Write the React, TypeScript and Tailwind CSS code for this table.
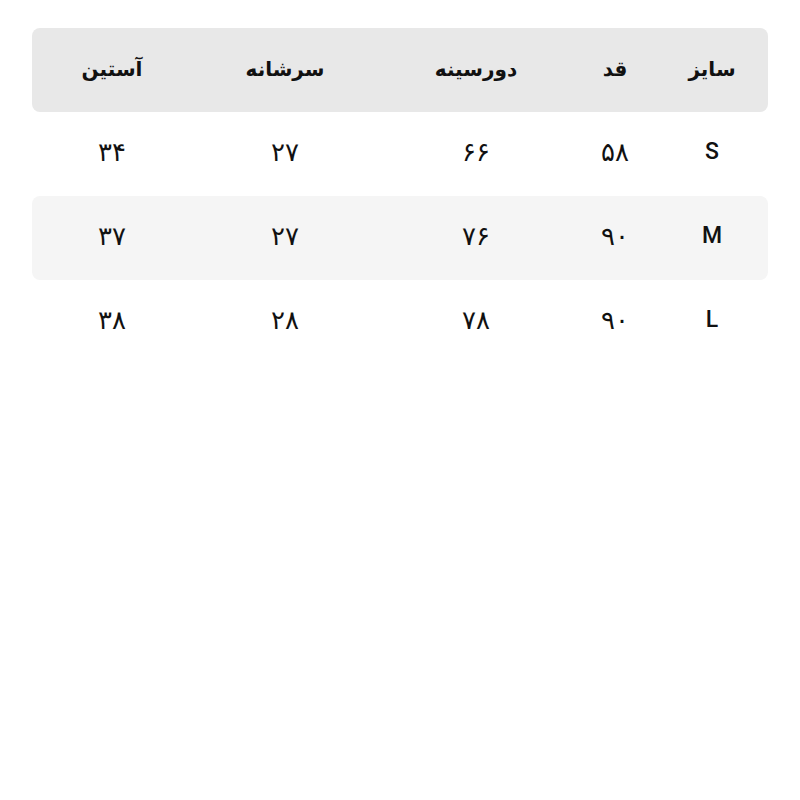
const headers = ['سایز', 'قد', 'دورسینه', 'سرشانه', 'آستین']
const widths = ['w-[112px]', 'w-[82px]', 'w-[196px]', 'w-[186px]', 'w-[160px]']

const rows = [
  ['S', '۵۸', '۶۶', '۲۷', '۳۴'],
  ['M', '۹۰', '۷۶', '۲۷', '۳۷'],
  ['L', '۹۰', '۷۸', '۲۸', '۳۸'],
]

export default function App() {
  return (
    <div
      dir="rtl"
      className="min-h-screen w-full bg-white px-8 pt-7 text-[#111] font-['Roboto','DejaVu_Sans',sans-serif]"
    >
      <div className="flex h-[84px] items-center rounded-lg bg-[#e8e8e8] pb-[2px] text-[20px] font-bold">
        {headers.map((h, i) => (
          <div key={h} className={`${widths[i]} text-center`}>
            {h}
          </div>
        ))}
      </div>
      {rows.map((r, ri) => (
        <div
          key={r[0]}
          className={`flex h-[84px] items-center rounded-lg pb-[4px] ${ri === 1 ? 'bg-[#f5f5f5]' : ''}`}
        >
          {r.map((c, i) => (
            <div
              key={i}
              className={`${widths[i]} text-center ${i === 0 ? 'text-[23px] font-medium' : 'text-[26px]'}`}
            >
              {c}
            </div>
          ))}
        </div>
      ))}
    </div>
  )
}
